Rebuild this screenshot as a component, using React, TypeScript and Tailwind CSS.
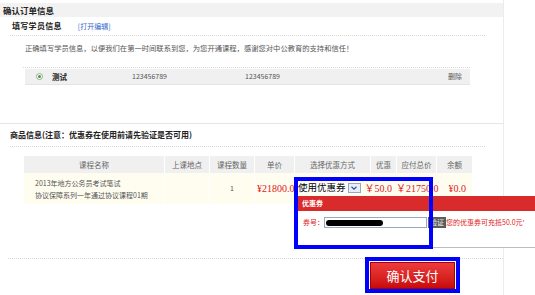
import React from "react";

const heads = ["课程名称", "上课地点", "课程数量", "单价", "选择优惠方式", "优惠", "应付总价", "余额"];

export default function App() {
  return (
    <div className="relative w-[535px] h-[295px] overflow-hidden bg-white font-['Noto_Sans_CJK_SC',sans-serif] text-[#333]">
      <div className="w-[504px] h-full border-r border-[#ececec] pt-[3px]">
        {/* page header */}
        <div className="h-[14px] bg-[#f2f2f2] pl-[3px] text-[8.5px] font-bold leading-[14px] text-[#222]">
          确认订单信息
        </div>

        {/* student info */}
        <div className="ml-[10px] w-[475px] h-[19px] flex items-center border-b border-dotted border-[#d8d8d8]">
          <span className="ml-[2px] text-[8px] font-bold tracking-[0.3px] text-[#222]">填写学员信息</span>
          <span className="ml-[16px] text-[7px] text-[#3366cc]">[打开编辑]</span>
        </div>
        <div className="h-[31px] pl-[25px] pt-[8px] text-[7.3px] leading-[8px] text-[#555]">
          正确填写学员信息，以便我们在第一时间联系到您，为您开通课程，感谢您对中公教育的支持和信任！
        </div>
        <div className="ml-[23px] w-[447px] border-t border-dotted border-[#d8d8d8] pt-[1px]">
          <div className="ml-[2px] h-[16px] bg-[#f0f0f0] border-b border-[#e4e4e4] flex items-center text-[7px] text-[#555]">
            <span className="ml-[11px] w-[7px] h-[7px] rounded-full border border-[#9aa89a] bg-white flex items-center justify-center">
              <span className="w-[3px] h-[3px] rounded-full bg-[#2fa52f]" />
            </span>
            <span className="ml-[9px] w-[80px] text-[7.5px] font-bold text-[#222]">测试</span>
            <span className="w-[113px]">123456789</span>
            <span className="flex-1">123456789</span>
            <span className="mr-[8px]">删除</span>
          </div>
        </div>

        {/* goods info */}
        <div className="mt-[38px] border-t border-[#e6e6e6]">
          <div className="ml-[10px] w-[475px] h-[23px] flex items-center border-b border-dotted border-[#d8d8d8]">
            <span className="text-[8px] font-bold text-[#222]">商品信息(注意：优惠券在使用前请先验证是否可用)</span>
          </div>
        </div>

        <div className="ml-[24px] mt-[9px] w-[448px]">
          <div className="grid grid-cols-[141px_45px_45px_40px_76px_26px_40px_35px] h-[17px] bg-[#f0f0f0] text-[7.5px] text-[#666]">
            {heads.map((h, i) => (
              <div key={h} className={`flex items-center justify-center whitespace-nowrap ${i < 7 ? "border-r border-white" : ""}`}>
                {h}
              </div>
            ))}
          </div>
          <div className="grid grid-cols-[141px_45px_45px_40px_177px] h-[31px] bg-[#fffdf0] text-[7px] text-[#555]">
            <div className="border-r border-white flex flex-col justify-center pl-[11px] leading-[12px]">
              <span>2013年地方公务员考试笔试</span>
              <span>协议保障系列一年通过协议课程01期</span>
            </div>
            <div className="border-r border-white" />
            <div className="border-r border-white flex items-center justify-center">1</div>
            <div className="border-r border-white flex items-center pl-[2px] whitespace-nowrap font-['Liberation_Serif','Noto_Sans_CJK_SC',serif] text-[10px] text-[#e02020]">
              ¥21800.0
            </div>
            <div className="flex items-center whitespace-nowrap font-['Liberation_Serif','Noto_Sans_CJK_SC',serif] text-[10px] text-[#e02020]">
              <div className="ml-[3px] flex items-center bg-white h-[11px] mt-[-2px]">
                <span className="font-['Noto_Sans_CJK_SC',sans-serif] text-[9.5px] leading-[11px] text-black">使用优惠券</span>
                <span className="ml-[2px] w-[13px] h-[10px] border border-[#9aa6bd] bg-[#e8eef8] flex items-center justify-center">
                  <svg width="6" height="4" viewBox="0 0 6 4">
                    <path d="M0.5 0.8 L3 3.2 L5.5 0.8" fill="none" stroke="#3050a0" strokeWidth="1.2" />
                  </svg>
                </span>
              </div>
              <span className="ml-[4px]">￥50.0</span>
              <span className="ml-[4px]">￥21750.0</span>
              <span className="ml-[10px]">¥0.0</span>
            </div>
          </div>
        </div>

        <div className="mt-[54px] ml-[8px] border-t border-dotted border-[#d8d8d8]">
          <button className="ml-[362px] mt-[3px] w-[85px] h-[27px] border border-[#a80000] bg-gradient-to-b from-[#ee3a3a] to-[#c80808] text-[13px] text-white flex items-center justify-center">
            确认支付
          </button>
        </div>
      </div>

      {/* coupon popup */}
      <div className="absolute left-[298px] top-[196px] right-0 h-[52px] bg-white border-b border-[#bdbdbd]">
        <div className="h-[15px] bg-[#d92b2b] pl-[4px] text-[7px] font-bold leading-[15px] text-white">优惠券</div>
        <div className="flex items-center pt-[6px] pl-[5px] text-[7px] text-[#e02020] whitespace-nowrap">
          <span>券号：</span>
          <span className="w-[103px] h-[11px] border border-[#99a7c2] bg-white flex items-center">
            <span className="ml-[1px] w-[57px] h-[6px] rounded-full bg-black" />
          </span>
          <span className="ml-[1px] h-[11px] px-[2px] bg-[#5c5c5c] text-[#ececec] leading-[11px]">验证</span>
          <span>您的优惠券可充抵50.0元'</span>
        </div>
      </div>

      {/* annotation boxes */}
      <div className="absolute left-[294px] top-[177px] w-[139px] h-[72px] border-4 border-[#0000ff]" />
      <div className="absolute left-[365px] top-[257px] w-[95px] h-[36px] border-4 border-[#0000ff]" />
    </div>
  );
}
